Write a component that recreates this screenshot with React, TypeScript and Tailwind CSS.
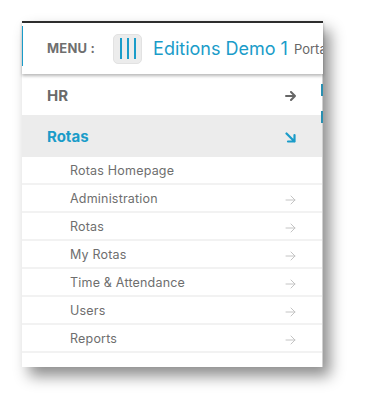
import React from "react";

const font = { fontFamily: "Inter, 'Noto Sans', sans-serif" };

function ArrowRight({ className }: { className?: string }) {
  return (
    <svg width="11" height="10" viewBox="0 0 11 10" className={className} fill="none" stroke="currentColor" strokeLinecap="round" strokeLinejoin="round">
      <path d="M1 5h9M6 1l4 4-4 4" />
    </svg>
  );
}

function ArrowDownRight({ className }: { className?: string }) {
  return (
    <svg width="11" height="11" viewBox="0 0 11 11" className={className} fill="none" stroke="currentColor" strokeLinecap="round" strokeLinejoin="round">
      <path d="M1.5 1.5l8 8M9.5 3v6.5H3" />
    </svg>
  );
}

const subItems = [
  { label: "Rotas Homepage", arrow: false },
  { label: "Administration", arrow: true },
  { label: "Rotas", arrow: true },
  { label: "My Rotas", arrow: true },
  { label: "Time & Attendance", arrow: true },
  { label: "Users", arrow: true },
  { label: "Reports", arrow: true },
];

export default function App() {
  return (
    <div className="w-[366px] h-[410px] bg-white pt-[21px] pl-[22px]" style={font}>
      <div className="relative w-[301px] h-[346px] bg-white flex flex-col shadow-[7px_9px_14px_rgba(0,0,0,0.45)]">
        {/* header */}
        <div className="relative z-10 h-[53px] shrink-0 border-t-2 border-[#2d2d2d] bg-white shadow-[0_2px_3px_rgba(0,0,0,0.28)] flex items-center pl-[25px] overflow-hidden">
          <span className="absolute left-[-1px] top-[3px] h-[40px] w-[2px] bg-[#1a9cc9]" />
          <span className="text-[13px] font-bold text-[#6f6f6f] tracking-[0.2px] whitespace-nowrap">MENU :</span>
          <div className="ml-[18px] w-[29px] h-[30px] shrink-0 rounded-[5px] bg-[#ececec] border border-[#e2e2e2] flex items-center justify-center gap-[5px]">
            <span className="w-[2px] h-[21px] bg-[#1a9cc9]" />
            <span className="w-[2px] h-[21px] bg-[#1a9cc9]" />
            <span className="w-[2px] h-[21px] bg-[#1a9cc9]" />
          </div>
          <span className="ml-[11px] text-[18px] text-[#1a9cc9] whitespace-nowrap leading-none">Editions Demo 1</span>
          <span className="ml-[6px] text-[13px] text-[#666] whitespace-nowrap leading-none mt-[2px]">Portal</span>
        </div>
        {/* menu */}
        <div className="relative flex-1 flex flex-col border-r border-[#cfcfcf]">
          <span className="absolute right-[-1px] top-[10px] w-[2px] h-[12px] bg-[#2a8fb0]" />
          <span className="absolute right-[-1px] top-[37px] w-[2px] h-[12px] bg-[#2a8fb0]" />
          <div className="h-[41px] flex items-center justify-between pl-[25px] pr-[26px] pt-[3px]">
            <span className="text-[15px] font-bold text-[#6a6a6a]">HR</span>
            <ArrowRight className="text-[#666] [stroke-width:2]" />
          </div>
          <div className="h-[42px] bg-[#ececec] flex items-center justify-between pl-[25px] pr-[26px] pt-[3px]">
            <span className="text-[15px] font-bold text-[#1a9cc9]">Rotas</span>
            <ArrowDownRight className="text-[#1a9cc9] [stroke-width:2.2]" />
          </div>
          {subItems.map((it) => (
            <div
              key={it.label}
              className="h-[28px] flex items-center justify-between pl-[48px] pr-[26px] pt-[3px] border-b-2 border-[#f2f2f2]"
            >
              <span className="text-[12.5px] tracking-[0.2px] text-[#6e6e6e]">{it.label}</span>
              {it.arrow && <ArrowRight className="text-[#c4c4c4] [stroke-width:1]" />}
            </div>
          ))}
        </div>
      </div>
    </div>
  );
}
